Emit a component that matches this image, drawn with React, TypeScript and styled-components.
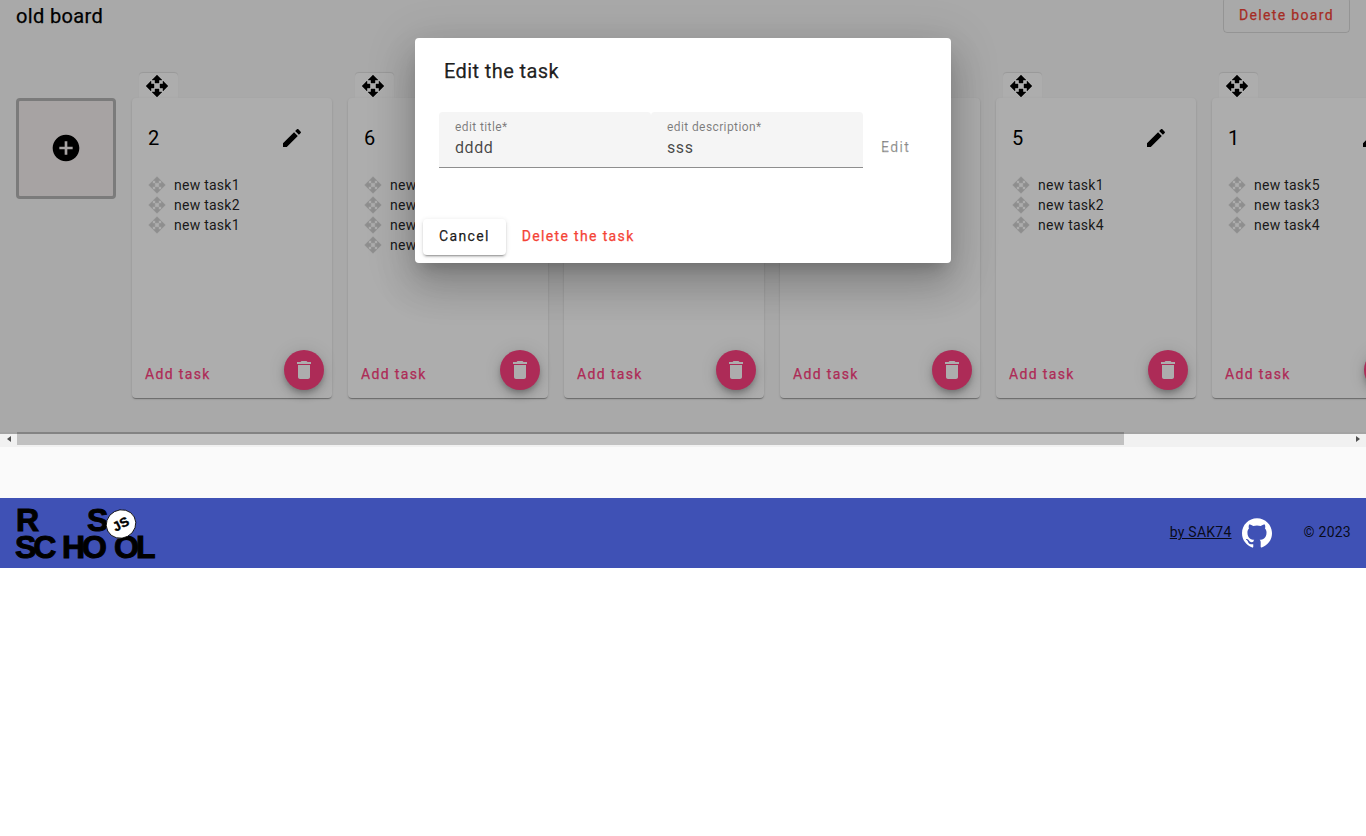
import React, { FC } from "react";
import styled, { createGlobalStyle } from "styled-components";

interface IColumn {
  id: string;
  title: string;
  tasks: string[];
}

const columns: IColumn[] = [
  { id: "c1", title: "2", tasks: ["new task1", "new task2", "new task1"] },
  { id: "c2", title: "6", tasks: ["new task1", "new task2", "new task3", "new task4"] },
  { id: "c3", title: "3", tasks: ["new task1", "new task2"] },
  { id: "c4", title: "4", tasks: ["new task1", "new task2"] },
  { id: "c5", title: "5", tasks: ["new task1", "new task2", "new task4"] },
  { id: "c6", title: "1", tasks: ["new task5", "new task3", "new task4"] },
  { id: "c7", title: "7", tasks: ["new task1"] },
];

const GlobalStyle = createGlobalStyle`
  html, body {
    margin: 0;
    padding: 0;
    background: #fff;
    font-family: Roboto, "Liberation Sans", sans-serif;
    color: #000;
    overflow: hidden;
  }
  * { box-sizing: border-box; }
`;

const Page = styled.div`
  position: relative;
  height: 836px;
  overflow: hidden;
`;

const Main = styled.main`
  height: 498px;
  background: #fafafa;
`;

const BoardHeader = styled.header`
  height: 33px;
  padding: 0 16px;
  display: flex;
  justify-content: space-between;
  align-items: flex-end;
`;

const BoardTitle = styled.h1`
  margin: 0 0 6px;
  font-size: 20px;
  line-height: 22px;
  font-weight: 400;
  -webkit-text-stroke: 0.25px currentColor;
  letter-spacing: 0.35px;
`;

const TextButton = styled.button<{ $color?: string }>`
  border: none;
  background: transparent;
  padding: 0 16px 2px;
  height: 36px;
  font: 400 14px/34px Roboto, sans-serif;
  -webkit-text-stroke: 0.25px currentColor;
  letter-spacing: 1.35px;
  color: ${(p) => p.$color || "#000"};
  white-space: nowrap;
`;

const OutlinedButton = styled(TextButton)`
  width: 127px;
  padding: 0;
  flex: none;
  border: 1px solid rgba(0, 0, 0, 0.12);
  border-radius: 4px;
`;

const BoardScroller = styled.div`
  height: 399px;
  overflow: hidden;
`;

const BoardRow = styled.div`
  width: 1644px;
  padding: 40px 16px 0;
  display: flex;
  align-items: flex-start;
  gap: 16px;
`;

const ScrollTrack = styled.div`
  height: 15px;
  display: flex;
  background: #f1f1f1;
`;

const ScrollArrow = styled.div`
  width: 17px;
  height: 13px;
  flex: none;
  display: flex;
  align-items: center;
  justify-content: center;
`;

const ArrowHead = styled.i<{ $dir: "left" | "right" }>`
  width: 0;
  height: 0;
  border-top: 3.5px solid transparent;
  border-bottom: 3.5px solid transparent;
  ${(p) => (p.$dir === "left" ? "border-right: 4px solid #505050;" : "border-left: 4px solid #505050;")}
`;

const ScrollThumb = styled.div`
  width: 1107px;
  height: 13px;
  flex: none;
  background: #c1c1c1;
`;

const ScrollSpace = styled.div`
  flex: 1;
`;

const AddBoardTile = styled.div`
  width: 100px;
  height: 101px;
  margin-top: 25px;
  padding-bottom: 2px;
  flex: none;
  display: flex;
  align-items: center;
  justify-content: center;
  background: #f7f0f0;
  border: 3px solid #b5b5b5;
  border-radius: 4px;
  svg {
    display: block;
  }
`;

const ColumnWrap = styled.section`
  width: 200px;
  flex: none;
`;

const DragTab = styled.div`
  width: 39px;
  height: 25px;
  margin-left: 7px;
  padding-left: 6px;
  display: flex;
  align-items: center;
  background: #fff;
  border-radius: 4px 4px 0 0;
  box-shadow: 0 -1px 1px rgba(0, 0, 0, 0.1);
`;

const Card = styled.article`
  position: relative;
  height: 300px;
  display: flex;
  flex-direction: column;
  background: #fff;
  border-radius: 4px;
  box-shadow: 0 2px 1px -1px rgba(0, 0, 0, 0.2), 0 1px 1px 0 rgba(0, 0, 0, 0.14),
    0 1px 3px 0 rgba(0, 0, 0, 0.12);
`;

const CardHead = styled.div`
  height: 77px;
  padding: 3px 28px 0 16px;
  display: flex;
  align-items: center;
  justify-content: space-between;
  font-size: 20px;
`;

const TaskList = styled.ul`
  list-style: none;
  margin: 0;
  padding: 0 0 0 16px;
  flex: 1;
`;

const TaskRow = styled.li`
  height: 20px;
  display: flex;
  align-items: center;
  gap: 8px;
  font-size: 14px;
  letter-spacing: 0.25px;
  color: rgba(0, 0, 0, 0.87);
  svg {
    flex: none;
  }
`;

const CardFooter = styled.div`
  padding: 0 8px 8px 0;
  display: flex;
  align-items: flex-end;
  justify-content: space-between;
`;

const AddTask = styled(TextButton)`
  padding: 0 13px;
  margin-bottom: -2px;
`;

const Fab = styled.button`
  width: 40px;
  height: 40px;
  padding: 0;
  border: none;
  border-radius: 50%;
  display: flex;
  align-items: center;
  justify-content: center;
  background: #ff4081;
  color: #fff;
  box-shadow: 0 3px 5px -1px rgba(0, 0, 0, 0.2), 0 6px 10px 0 rgba(0, 0, 0, 0.14),
    0 1px 18px 0 rgba(0, 0, 0, 0.12);
`;

const SiteFooter = styled.footer`
  height: 70px;
  padding: 0 15px;
  display: flex;
  align-items: center;
  justify-content: space-between;
  background: #3f51b5;
  font-size: 14px;
  letter-spacing: 0.25px;
`;

const LogoMark = styled.svg`
  align-self: flex-start;
  margin-top: 10px;
  display: block;
`;

const FooterRight = styled.div`
  display: flex;
  align-items: center;
`;

const AuthorLink = styled.a`
  margin-bottom: 2px;
  color: rgba(0, 0, 0, 0.87);
  text-decoration: underline;
`;

const Copyright = styled.span`
  margin-bottom: 2px;
  color: rgba(0, 0, 0, 0.87);
`;

const GithubMark = styled.svg`
  margin: 0 32px 0 10px;
  display: block;
`;

const Backdrop = styled.div`
  position: absolute;
  left: 0;
  top: 0;
  width: 100%;
  height: 434px;
  background: rgba(0, 0, 0, 0.32);
`;

const Dialog = styled.div`
  position: absolute;
  left: 415px;
  top: 38px;
  width: 536px;
  height: 225px;
  display: flex;
  flex-direction: column;
  background: #fff;
  border-radius: 4px;
  box-shadow: 0 11px 15px -7px rgba(0, 0, 0, 0.2), 0 24px 38px 3px rgba(0, 0, 0, 0.14),
    0 9px 46px 8px rgba(0, 0, 0, 0.12);
`;

const DialogTitle = styled.h2`
  margin: 0;
  padding: 21px 29px 0;
  height: 74px;
  font-size: 20px;
  line-height: 24px;
  font-weight: 400;
  -webkit-text-stroke: 0.25px currentColor;
  letter-spacing: 0.4px;
  color: rgba(0, 0, 0, 0.87);
`;

const FormRow = styled.div`
  padding: 0 24px;
  display: flex;
  align-items: center;
`;

const Field = styled.div`
  width: 212px;
  height: 56px;
  padding: 8px 16px 0;
  background: #f5f5f5;
  border-radius: 4px 4px 0 0;
  border-bottom: 1px solid rgba(0, 0, 0, 0.42);
`;

const FieldLabel = styled.div`
  font-size: 12px;
  line-height: 14px;
  letter-spacing: 0.4px;
  color: rgba(0, 0, 0, 0.5);
`;

const FieldValue = styled.div`
  margin-top: 4px;
  font-size: 16px;
  line-height: 20px;
  letter-spacing: 0.6px;
  color: rgba(0, 0, 0, 0.72);
`;

const EditButton = styled(TextButton)`
  margin: 16px 0 0 2px;
  color: rgba(0, 0, 0, 0.38);
`;

const DialogActions = styled.div`
  margin-top: auto;
  padding: 0 8px 8px;
  display: flex;
  align-items: center;
`;

const RaisedButton = styled(TextButton)`
  background: #fff;
  border-radius: 4px;
  color: rgba(0, 0, 0, 0.87);
  box-shadow: 0 3px 1px -2px rgba(0, 0, 0, 0.2), 0 2px 2px 0 rgba(0, 0, 0, 0.14),
    0 1px 5px 0 rgba(0, 0, 0, 0.12);
`;

const DragIcon: FC<{ size: number; color: string; weight: number }> = ({ size, color, weight }) => (
  <svg width={size} height={size} viewBox="0 0 24 24" fill={color} stroke={color} strokeWidth={weight}>
    <path d="M10 9h4V6h3l-5-5-5 5h3v3zm-1 1H6V7l-5 5 5 5v-3h3v-4zm14 2l-5-5v3h-3v4h3v3l5-5zm-9 3h-4v3H7l5 5 5-5h-3v-3z" />
  </svg>
);

const Logo: FC = () => (
  <LogoMark width="142" height="60" viewBox="0 0 142 60">
    <g fontFamily="'Liberation Sans', sans-serif" fontWeight="700" fontSize="32" stroke="#000" strokeWidth="1">
      <text x="1" y="23">R</text>
      <text x="72" y="23">S</text>
      <text x="0" y="50" letterSpacing="-3">SC</text>
      <text x="47" y="50" letterSpacing="-3">HO</text>
      <text x="99" y="50" letterSpacing="-3">OL</text>
    </g>
    <g transform="rotate(-28 106 16)">
      <ellipse cx="106" cy="16" rx="15" ry="14" fill="#fff" stroke="#000" strokeWidth="0.8" />
      <text x="106" y="20.5" textAnchor="middle" fontFamily="'Liberation Sans', sans-serif" fontWeight="700" fontSize="13" fill="#000" stroke="#000" strokeWidth="0.4">JS</text>
    </g>
  </LogoMark>
);

const BoardColumn: FC<{ column: IColumn }> = ({ column }) => (
  <ColumnWrap>
    <DragTab>
      <DragIcon size={24} color="#000" weight={0.4} />
    </DragTab>
    <Card>
      <CardHead>
        <span>{column.title}</span>
        <svg width="24" height="24" viewBox="0 0 24 24" fill="#000">
          <path d="M3 17.25V21h3.75L17.81 9.94l-3.75-3.75L3 17.25zM20.71 7.04c.39-.39.39-1.02 0-1.41l-2.34-2.34c-.39-.39-1.02-.39-1.41 0l-1.83 1.83 3.75 3.75 1.83-1.83z" />
        </svg>
      </CardHead>
      <TaskList>
        {column.tasks.map((task, i) => (
          <TaskRow key={i}>
            <DragIcon size={18} color="#d2d2d2" weight={0.9} />
            {task}
          </TaskRow>
        ))}
      </TaskList>
      <CardFooter>
        <AddTask $color="#ff4081">Add task</AddTask>
        <Fab>
          <svg width="24" height="24" viewBox="0 0 24 24" fill="currentColor">
            <path d="M6 19c0 1.1.9 2 2 2h8c1.1 0 2-.9 2-2V7H6v12zM19 4h-3.5l-1-1h-5l-1 1H5v2h14V4z" />
          </svg>
        </Fab>
      </CardFooter>
    </Card>
  </ColumnWrap>
);

const App: FC = () => {
  return (
    <Page>
      <GlobalStyle />
      <Main>
        <BoardHeader>
          <BoardTitle>old board</BoardTitle>
          <OutlinedButton $color="#f44336">Delete board</OutlinedButton>
        </BoardHeader>
        <BoardScroller>
          <BoardRow>
            <AddBoardTile>
              <svg width="32" height="32" viewBox="0 0 24 24" fill="#000">
                <path d="M12 2C6.48 2 2 6.48 2 12s4.48 10 10 10 10-4.48 10-10S17.52 2 12 2zm5 11h-4v4h-2v-4H7v-2h4V7h2v4h4v2z" />
              </svg>
            </AddBoardTile>
            {columns.map((column) => (
              <BoardColumn key={column.id} column={column} />
            ))}
          </BoardRow>
        </BoardScroller>
        <ScrollTrack>
          <ScrollArrow>
            <ArrowHead $dir="left" />
          </ScrollArrow>
          <ScrollThumb />
          <ScrollSpace />
          <ScrollArrow>
            <ArrowHead $dir="right" />
          </ScrollArrow>
        </ScrollTrack>
      </Main>
      <SiteFooter>
        <Logo />
        <FooterRight>
          <AuthorLink>by SAK74</AuthorLink>
          <GithubMark width="30" height="30" viewBox="0 0 24 24" fill="#fff">
            <path d="M12 .297c-6.63 0-12 5.373-12 12 0 5.303 3.438 9.8 8.205 11.385.6.113.82-.258.82-.63 0-.33-.01-1.07-.015-2.1-3.338.726-4.042-1.61-4.042-1.61-.546-1.387-1.333-1.756-1.333-1.756-1.09-.745.083-.73.083-.73 1.205.084 1.84 1.237 1.84 1.237 1.07 1.835 2.807 1.305 3.492.998.108-.775.418-1.305.76-1.605-2.665-.3-5.466-1.332-5.466-5.93 0-1.31.465-2.38 1.235-3.22-.135-.303-.54-1.523.105-3.176 0 0 1.005-.322 3.3 1.23.96-.267 1.98-.399 3-.405 1.02.006 2.04.138 3 .405 2.28-1.552 3.285-1.23 3.285-1.23.645 1.653.24 2.873.12 3.176.765.84 1.23 1.91 1.23 3.22 0 4.61-2.805 5.625-5.475 5.92.42.36.81 1.096.81 2.22 0 1.606-.015 2.896-.015 3.286 0 .315.21.69.825.57C20.565 22.092 24 17.592 24 12.297c0-6.627-5.373-12-12-12" />
          </GithubMark>
          <Copyright>© 2023</Copyright>
        </FooterRight>
      </SiteFooter>
      <Backdrop />
      <Dialog>
        <DialogTitle>Edit the task</DialogTitle>
        <FormRow>
          <Field>
            <FieldLabel>edit title*</FieldLabel>
            <FieldValue>dddd</FieldValue>
          </Field>
          <Field>
            <FieldLabel>edit description*</FieldLabel>
            <FieldValue>sss</FieldValue>
          </Field>
          <EditButton>Edit</EditButton>
        </FormRow>
        <DialogActions>
          <RaisedButton>Cancel</RaisedButton>
          <TextButton $color="#f44336">Delete the task</TextButton>
        </DialogActions>
      </Dialog>
    </Page>
  );
};

export default App;
